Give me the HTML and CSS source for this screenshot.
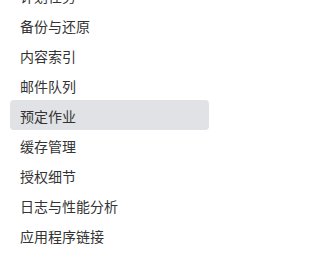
FILE: index.html
```html
<!DOCTYPE html>
<html lang="zh-CN">
<head>
<meta charset="utf-8">
<link rel="stylesheet" href="styles.css">
</head>
<body>
<ul class="menu">
  <li class="item">计划任务</li>
  <li class="item">备份与还原</li>
  <li class="item">内容索引</li>
  <li class="item">邮件队列</li>
  <li class="item active">预定作业</li>
  <li class="item">缓存管理</li>
  <li class="item">授权细节</li>
  <li class="item">日志与性能分析</li>
  <li class="item">应用程序链接</li>
</ul>
</body>
</html>
```
FILE: styles.css
```css
html, body {
  margin: 0;
  padding: 0;
  background: #ffffff;
}
body {
  width: 218px;
  height: 253px;
  overflow: hidden;
  font-family: "Noto Sans CJK SC", "Noto Sans", sans-serif;
}
.menu {
  list-style: none;
  margin: -20px 9px 0 10px;
  padding: 0;
  display: flex;
  flex-direction: column;
}
.item {
  height: 28px;
  line-height: 28px;
  padding: 2px 0 0 10px;
  font-size: 14px;
  color: #333333;
  border-radius: 4px;
  white-space: nowrap;
}
.item.active {
  background: #e1e2e6;
}
```
